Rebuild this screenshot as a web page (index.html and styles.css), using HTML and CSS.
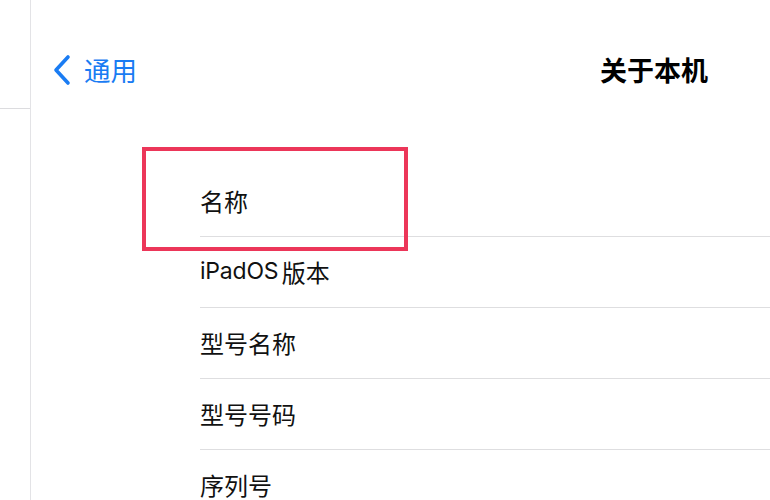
FILE: index.html
```html
<!DOCTYPE html>
<html lang="zh">
<head>
<meta charset="utf-8">
<link rel="stylesheet" href="styles.css">
</head>
<body>
<div class="screen">
  <aside class="sidebar">
    <div class="sidebar-top"></div>
  </aside>
  <main class="main">
    <header class="nav">
      <a class="back">
        <svg class="chev" width="20" height="32" viewBox="0 0 20 32"><polyline points="16,3 4,16 16,29" fill="none" stroke="#1a7cf3" stroke-width="3.6" stroke-linecap="round" stroke-linejoin="round"/></svg>
        <span class="back-text">通用</span>
      </a>
      <h1 class="title">关于本机</h1>
    </header>
    <ul class="list">
      <li class="row">名称</li>
      <li class="row"><span class="latin">iPadOS</span> 版本</li>
      <li class="row">型号名称</li>
      <li class="row">型号号码</li>
      <li class="row">序列号</li>
    </ul>
    <div class="highlight"></div>
  </main>
</div>
</body>
</html>
```
FILE: styles.css
```css
* { box-sizing: border-box; }
html, body { margin: 0; padding: 0; background: #fff; }
body {
  font-family: "Noto Sans CJK SC", sans-serif;
  color: #111;
  width: 770px;
  height: 500px;
  overflow: hidden;
}
.screen { display: flex; height: 500px; }
.sidebar {
  width: 31px;
  flex: none;
  border-right: 1px solid #e3e3e6;
}
.sidebar-top {
  height: 109px;
  border-bottom: 1px solid #dcdcdf;
}
.main { flex: 1; position: relative; }
.nav {
  height: 166px;
  display: flex;
  align-items: flex-start;
  justify-content: space-between;
  padding: 54px 62px 0 21px;
}
.back {
  display: flex;
  align-items: center;
  gap: 12px;
  color: #1a7cf3;
  height: 32px;
}
.chev { display: block; }
.back-text { font-size: 26.5px; line-height: 32px; }
.title {
  margin: 0;
  font-size: 27px;
  line-height: 32px;
  font-weight: 700;
  color: #000;
}
.list { list-style: none; margin: 0; padding: 0 0 0 169px; }
.row {
  height: 71px;
  display: flex;
  align-items: center;
  font-size: 24px;
  white-space: pre;
  border-bottom: 1px solid #dedee0;
  padding-bottom: 2px;
}
.latin { font-family: "Inter", sans-serif; font-size: 23px; letter-spacing: -0.2px; margin-right: -2px; }
.highlight {
  position: absolute;
  left: 111px;
  top: 147px;
  width: 266px;
  height: 104px;
  border: 4px solid #ec3659;
}
```
